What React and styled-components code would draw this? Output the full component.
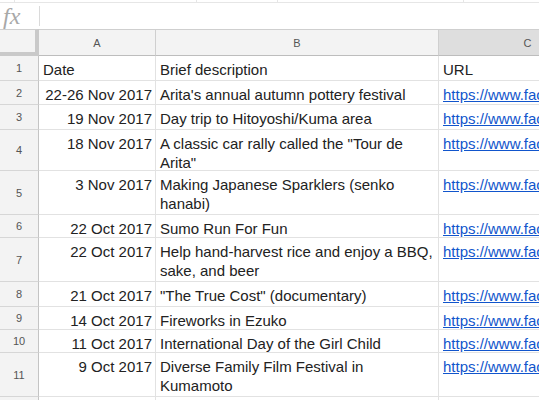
import React from 'react';
import styled, { createGlobalStyle } from 'styled-components';

const GlobalStyle = createGlobalStyle`
  html, body {
    margin: 0;
    padding: 0;
    background: #fff;
    overflow: hidden;
  }
  body {
    font-family: "Liberation Sans", Arial, sans-serif;
  }
`;

const Sheet = styled.div`
  width: 539px;
  height: 400px;
  overflow: hidden;
  background: #fff;
`;

const TopStrip = styled.div`
  display: flex;
  height: 2px;
  border-bottom: 1px solid #e6e6e6;
`;

const StripSegment = styled.div`
  width: ${p => p.w}px;
  flex: none;
  border-right: 1px solid #e6e6e6;
`;

const FormulaBar = styled.div`
  display: flex;
  align-items: center;
  height: 26px;
`;

const FxLabel = styled.div`
  width: 39px;
  flex: none;
  box-sizing: border-box;
  padding-left: 3px;
  font-family: "Liberation Serif", "Times New Roman", serif;
  font-style: italic;
  font-size: 24px;
  line-height: 26px;
  color: #a8a8a8;
`;

const FxDivider = styled.div`
  width: 1px;
  height: 20px;
  background: #dadada;
`;

const Row = styled.div`
  display: grid;
  grid-template-columns: 39px 117px 283px 178px;
  height: ${p => p.h}px;
  box-sizing: border-box;
`;

const Corner = styled.div`
  background: #f3f3f3;
  border-top: 1px solid #cfcfcf;
  border-right: 4px solid #c9c9c9;
  border-bottom: 4px solid #c9c9c9;
  box-sizing: border-box;
`;

const ColHeader = styled.div`
  background: ${p => (p.selected ? '#dedede' : '#f3f3f3')};
  border-top: 1px solid #cfcfcf;
  border-right: 1px solid #cfcfcf;
  border-bottom: 1px solid #bdbdbd;
  box-sizing: border-box;
  display: flex;
  align-items: center;
  justify-content: center;
  font-size: 11px;
  color: #555;
`;

const RowHeader = styled.div`
  background: #f3f3f3;
  border-right: 1px solid #c4c4c4;
  border-bottom: 1px solid #d6d6d6;
  box-sizing: border-box;
  display: flex;
  align-items: center;
  justify-content: center;
  font-size: 11px;
  color: #555;
`;

const Cell = styled.div`
  border-right: 1px solid #e2e2e2;
  border-bottom: 1px solid #e2e2e2;
  box-sizing: border-box;
  padding: 4px 3px 0 4px;
  font-size: 15px;
  line-height: 19px;
  color: #222;
  text-align: ${p => (p.right ? 'right' : 'left')};
  overflow: hidden;
  white-space: ${p => (p.nowrap ? 'nowrap' : 'normal')};
`;

const Link = styled.a`
  color: #1155cc;
  text-decoration: underline;
`;

const rows = [
  { n: 1, h: 25, date: 'Date', desc: 'Brief description', url: 'URL', header: true },
  { n: 2, h: 24, date: '22-26 Nov 2017', desc: "Arita's annual autumn pottery festival" },
  { n: 3, h: 25, date: '19 Nov 2017', desc: 'Day trip to Hitoyoshi/Kuma area' },
  { n: 4, h: 41, date: '18 Nov 2017', desc: 'A classic car rally called the "Tour de Arita"' },
  { n: 5, h: 44, date: '3 Nov 2017', desc: 'Making Japanese Sparklers (senko hanabi)' },
  { n: 6, h: 23, date: '22 Oct 2017', desc: 'Sumo Run For Fun' },
  { n: 7, h: 44, date: '22 Oct 2017', desc: 'Help hand-harvest rice and enjoy a BBQ, sake, and beer' },
  { n: 8, h: 25, date: '21 Oct 2017', desc: '"The True Cost" (documentary)' },
  { n: 9, h: 23, date: '14 Oct 2017', desc: 'Fireworks in Ezuko' },
  { n: 10, h: 23, date: '11 Oct 2017', desc: 'International Day of the Girl Child' },
  { n: 11, h: 44, date: '9 Oct 2017', desc: 'Diverse Family Film Festival in Kumamoto' },
  { n: 12, h: 24, date: '', desc: '' },
];

export default function App() {
  return (
    <Sheet>
      <GlobalStyle />
      <TopStrip>
        <StripSegment w={14} />
        <StripSegment w={181} />
        <StripSegment w={80} />
        <StripSegment w={185} />
      </TopStrip>
      <FormulaBar>
        <FxLabel>fx</FxLabel>
        <FxDivider />
      </FormulaBar>
      <Row h={27}>
        <Corner />
        <ColHeader>A</ColHeader>
        <ColHeader>B</ColHeader>
        <ColHeader selected>C</ColHeader>
      </Row>
      {rows.map(r => (
        <Row key={r.n} h={r.h}>
          <RowHeader>{r.n === 12 ? '' : r.n}</RowHeader>
          <Cell nowrap right={!r.header}>{r.date}</Cell>
          <Cell>{r.desc}</Cell>
          <Cell nowrap>
            {r.header ? r.url : r.n === 12 ? '' : <Link>https://www.facebook.com/events/</Link>}
          </Cell>
        </Row>
      ))}
    </Sheet>
  );
}
